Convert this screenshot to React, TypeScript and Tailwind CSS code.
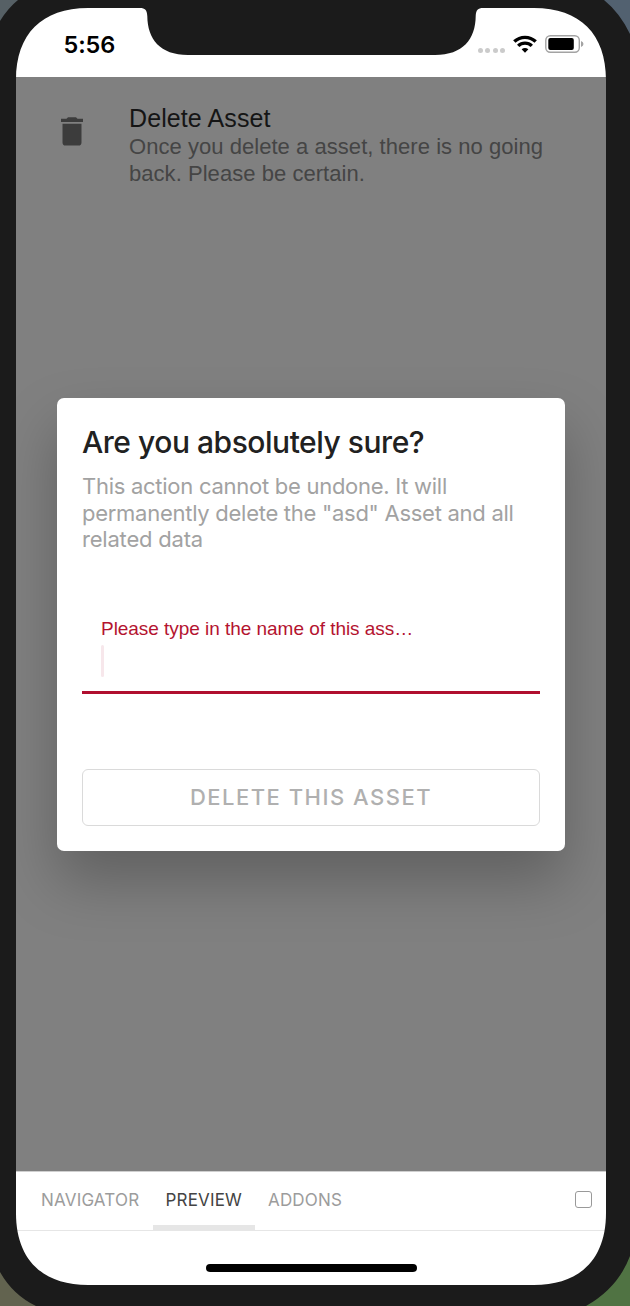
import React from "react";

function Corner({ className }: { className: string }) {
  return (
    <svg className={className} width="72" height="72" viewBox="0 0 72 72" aria-hidden="true">
      <path d="M-1 -1H72V0C26 0 0 26 0 72H-1Z" fill="#1b1b1b" />
    </svg>
  );
}

function Notch() {
  return (
    <svg className="absolute left-[124px] top-0" width="344" height="47" viewBox="0 0 344 47" aria-hidden="true">
      <path d="M0 -1V0C5 0 7 2 7.300 8C7.500 31 20 47 48 47H295C323 47 335.500 31 335.700 8C336 2 338 0 343 0V-1Z" fill="#1b1b1b" />
    </svg>
  );
}

function StatusBar() {
  return (
    <header className="relative flex h-[69px] shrink-0 items-start justify-between bg-white">
      <span className="mt-[22px] ml-[47.500px] font-[Inter,sans-serif] text-[23.500px] leading-[29px] font-semibold tracking-[-0.1px] text-black">5:56</span>
      <div className="mt-[27px] mr-[22px] flex items-start">
        <div className="mt-[13px] mr-[8px] flex gap-[2.300px]">
          <i className="size-[5px] rounded-full bg-[#cbcbcb]" />
          <i className="size-[5px] rounded-full bg-[#cbcbcb]" />
          <i className="size-[5px] rounded-full bg-[#cbcbcb]" />
          <i className="size-[5px] rounded-full bg-[#cbcbcb]" />
        </div>
        <svg className="mr-[8px]" width="24" height="19" viewBox="0 0 24 19" aria-hidden="true">
          <g fill="none" stroke="#000" strokeWidth="3.400">
            <path d="M1.300 6.600C7.300 .9 16.700 .9 22.700 6.600" />
            <path d="M5.200 10.900C9 7.200 15 7.200 18.800 10.900" />
          </g>
          <path d="M8.600 14.200Q12 11.600 15.400 14.200L12 17.800Z" />
        </svg>
        <svg width="39" height="19" viewBox="0 0 39 19" aria-hidden="true">
          <rect x=".8" y=".8" width="33.500" height="16.400" rx="4.500" fill="none" stroke="#a3a3a3" strokeWidth="1.400" />
          <rect x="3.300" y="3.100" width="25.500" height="11.800" rx="2" />
          <path d="M36 6Q38.500 7 38.500 9T36 12Z" fill="#a3a3a3" />
        </svg>
      </div>
      <Notch />
    </header>
  );
}

function ConfirmDialog() {
  return (
    <section className="mt-[212px] flex h-[453px] w-[508px] flex-col self-center rounded-[7px] bg-white px-[25px] pt-[25px] shadow-[0_30px_58px_rgba(0,0,0,0.25)]">
      <h1 className="font-[Inter,sans-serif] text-[30px] leading-[38px] font-medium tracking-[-0.47px] whitespace-nowrap text-[#212121]">Are you absolutely sure?</h1>
      <p className="mt-[12px] font-[Inter,sans-serif] text-[22px] leading-[26.500px] whitespace-nowrap text-[#a2a2a2]">
        <span className="block tracking-[-0.27px]">This action cannot be undone. It will</span>
        <span className="block tracking-[-0.27px]">permanently delete the "asd" Asset and all</span>
        <span className="block tracking-[-0.2px]">related data</span>
      </p>
      <div className="mt-[63px] h-[78px] border-b-[3px] border-[#b00e2f] pl-[19px]">
        <label className="block text-[19px] leading-[26px] tracking-[-0.04px] text-[#b4132f]">Please type in the name of this ass…</label>
        <i className="mt-[3px] block h-8 w-[3px] rounded-full bg-[#f7e7eb]" />
      </div>
      <button className="mt-[75px] h-[57px] rounded-md border border-[#dadada] font-[Inter,sans-serif] text-[22px] font-medium tracking-[1.500px] text-[#b0b0b0]">DELETE THIS ASSET</button>
    </section>
  );
}

function Tabs() {
  return (
    <nav className="flex h-[60px] shrink-0 border-y border-[#e6e6e6] border-t-[#cfcfcf] bg-white pl-[12px] font-[Inter,sans-serif] text-[17px] leading-[56px] tracking-[0.18px] text-[#9c9c9c]">
      <span className="w-[125px] pl-[13px]">NAVIGATOR</span>
      <span className="h-[58px] w-[102px] border-b-[5px] border-[#e6e6e6] pl-[12.500px] text-[#444]">PREVIEW</span>
      <span className="pl-[13px]">ADDONS</span>
      <i className="mt-[19px] mr-[14px] ml-auto size-[17px] rounded-[3px] border-[1.500px] border-[#999]" />
    </nav>
  );
}

export default function App() {
  return (
    <div className="relative h-[1306px] w-[630px] overflow-hidden bg-[#1b1b1b] px-4 pt-2 font-['Liberation_Sans',sans-serif]">
      <main className="relative flex h-[1277px] w-[590px] flex-col overflow-hidden bg-white">
        <StatusBar />
        <div className="flex h-[1094px] shrink-0 flex-col overflow-hidden bg-[#808080]">
          <div className="flex h-[109px] shrink-0 pt-[27px] pl-[45px]">
            <svg className="mt-[13px]" width="22" height="29" viewBox="0 0 22 29" aria-hidden="true">
              <path d="M0 1.800H5.500L7 .2H15L16.500 1.800H22V4.900H0ZM1.500 6.800H20.500V25.500Q20.500 28.600 17.500 28.600H4.500Q1.500 28.600 1.500 25.500Z" fill="#3c3c3c" />
            </svg>
            <div className="ml-[46px] whitespace-nowrap">
              <h2 className="text-[25px] leading-[28px] tracking-[0.1px] text-[#151515]">Delete Asset</h2>
              <p className="mt-px text-[22px] leading-[27px] tracking-[0.045px] text-[#454545]">
                Once you delete a asset, there is no going<br />back. Please be certain.
              </p>
            </div>
          </div>
          <ConfirmDialog />
        </div>
        <Tabs />
        <div className="mx-auto mt-[33px] h-2 w-[211px] shrink-0 rounded-full bg-black" />
        <Corner className="absolute top-0 left-0" />
        <Corner className="absolute top-0 right-0 rotate-90" />
        <Corner className="absolute right-0 bottom-0 rotate-180" />
        <Corner className="absolute bottom-0 left-0 -rotate-90" />
      </main>
      <svg className="absolute top-0 left-0" width="20" height="22" aria-hidden="true">
        <path d="M0 0H18Q8 8 0 21Z" fill="#566065" />
      </svg>
      <svg className="absolute top-0 right-0" width="28" height="34" aria-hidden="true">
        <path d="M28 0H2Q18 13 28 34Z" fill="#526170" />
      </svg>
      <svg className="absolute bottom-0 left-0" width="37" height="34" aria-hidden="true">
        <path d="M0 0V34H36Q13 23 0 0Z" fill="#62634f" />
      </svg>
      <svg className="absolute right-0 bottom-0" width="44" height="50" aria-hidden="true">
        <path d="M44 0V50H0Q32 32 44 0Z" fill="#507343" />
      </svg>
    </div>
  );
}
